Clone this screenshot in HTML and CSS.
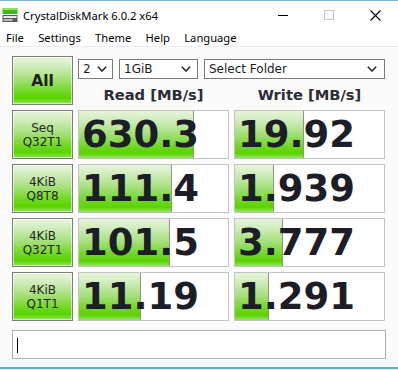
FILE: index.html
```html
<!DOCTYPE html>
<html>
<head>
<meta charset="utf-8">
<link rel="stylesheet" href="styles.css">
</head>
<body>
<div class="window">
  <div class="titlebar">
    <svg class="appicon" width="16" height="16" viewBox="0 0 16 16">
      <rect x="0.5" y="1" width="15" height="6" fill="#3fb81e"/>
      <rect x="0.5" y="1" width="15" height="2" fill="#8fe070"/>
      <rect x="0.5" y="8" width="15" height="7" fill="#5a5a5a"/>
      <rect x="1.5" y="9" width="13" height="2" fill="#e8e8e8"/>
      <rect x="1.5" y="12" width="9" height="2" fill="#bdbdbd"/>
    </svg>
    <span class="title">CrystalDiskMark 6.0.2 x64</span>
    <div class="controls">
      <div class="ctl"><svg width="10" height="10" viewBox="0 0 10 10"><line x1="0" y1="5.5" x2="10" y2="5.5" stroke="#000" stroke-width="1"/></svg></div>
      <div class="ctl"><svg width="10" height="10" viewBox="0 0 10 10"><rect x="0.5" y="0.5" width="9" height="9" fill="none" stroke="#c4c4c4" stroke-width="1"/></svg></div>
      <div class="ctl"><svg width="11" height="11" viewBox="0 0 11 11"><path d="M0.5 0.5 L10.5 10.5 M10.5 0.5 L0.5 10.5" stroke="#000" stroke-width="1.1"/></svg></div>
    </div>
  </div>
  <div class="menubar">
    <span>File</span><span>Settings</span><span>Theme</span><span>Help</span><span>Language</span>
  </div>
  <main class="panel">
    <div class="grid">
      <div class="btn all">All</div>
      <div class="topctl">
        <div class="selects">
          <div class="sel s1"><span>2</span><svg class="chev" width="10" height="6" viewBox="0 0 10 6"><path d="M0.8 0.8 L5 5 L9.2 0.8" fill="none" stroke="#222" stroke-width="1.5"/></svg></div>
          <div class="sel s2"><span>1GiB</span><svg class="chev" width="10" height="6" viewBox="0 0 10 6"><path d="M0.8 0.8 L5 5 L9.2 0.8" fill="none" stroke="#222" stroke-width="1.5"/></svg></div>
          <div class="sel s3"><span>Select Folder</span><svg class="chev" width="10" height="6" viewBox="0 0 10 6"><path d="M0.8 0.8 L5 5 L9.2 0.8" fill="none" stroke="#222" stroke-width="1.5"/></svg></div>
        </div>
        <div class="heads">
          <div class="head">Read [MB/s]</div>
          <div class="head">Write [MB/s]</div>
        </div>
      </div>

      <div class="btn label">Seq<br>Q32T1</div>
      <div class="val" style="--fill:114px">630.3</div>
      <div class="val" style="--fill:68px">19.92</div>

      <div class="btn label">4KiB<br>Q8T8</div>
      <div class="val" style="--fill:92px">111.4</div>
      <div class="val" style="--fill:38px">1.939</div>

      <div class="btn label">4KiB<br>Q32T1</div>
      <div class="val" style="--fill:90px">101.5</div>
      <div class="val" style="--fill:47px">3.777</div>

      <div class="btn label">4KiB<br>Q1T1</div>
      <div class="val" style="--fill:61px">11.19</div>
      <div class="val" style="--fill:33px">1.291</div>
    </div>
    <div class="comment"><span class="caret"></span></div>
  </main>
  <div class="taskline"></div>
</div>
</body>
</html>
```
FILE: styles.css
```css
* { box-sizing: border-box; }
html, body { margin: 0; padding: 0; }
body {
  width: 398px;
  height: 370px;
  overflow: hidden;
  background: #ffffff;
  font-family: "DejaVu Sans", sans-serif;
}
.window {
  width: 398px;
  height: 370px;
  display: flex;
  flex-direction: column;
  border-top: 1px solid #7fb4d6;
  background: #fbfbfb;
}
.titlebar {
  height: 28px;
  flex: none;
  display: flex;
  align-items: center;
  background: #ffffff;
  padding-left: 2px;
}
.appicon { flex: none; }
.title {
  margin-left: 5px;
  font-family: "Noto Sans", sans-serif;
  font-size: 11.2px;
  color: #000;
}
.controls {
  margin-left: auto;
  display: flex;
  height: 28px;
}
.ctl {
  width: 46px;
  height: 28px;
  display: flex;
  align-items: center;
  justify-content: center;
}
.menubar {
  height: 18px;
  flex: none;
  display: flex;
  align-items: center;
  gap: 14.3px;
  padding-left: 6px;
  padding-bottom: 1px;
  background: #ffffff;
  font-family: "Noto Sans", sans-serif;
  font-size: 11.2px;
  color: #000;
  border-bottom: 1px solid #ececec;
}
.panel {
  flex: 1;
  padding: 9px 12px 0 12px;
  display: flex;
  flex-direction: column;
}
.grid {
  display: grid;
  grid-template-columns: 61px 151px 151px;
  grid-auto-rows: 49px;
  column-gap: 5px;
  row-gap: 5px;
}
.btn {
  border: 1px solid #7d7d7d;
  box-shadow: inset 0 0 0 1px rgba(255,255,255,0.55);
  background: linear-gradient(to bottom, #e9f5e1 0%, #cdebb6 22%, #a4e078 48%, #72d826 72%, #5ad300 88%, #8ee55a 100%);
  display: flex;
  align-items: center;
  justify-content: center;
  text-align: center;
  color: #1d1d1d;
}
.all {
  font-weight: bold;
  font-size: 15.5px;
}
.label {
  font-size: 12px;
  line-height: 14px;
  color: #26261e;
}
.topctl {
  grid-column: 2 / 4;
  display: flex;
  flex-direction: column;
}
.selects {
  margin-top: 3px;
  display: flex;
  gap: 6px;
  height: 20px;
}
.sel {
  height: 20px;
  border: 1px solid #7a7a7a;
  background: #ffffff;
  display: flex;
  align-items: center;
  padding-left: 4px;
  padding-right: 6px;
  font-size: 12px;
  color: #1c1c1c;
}
.sel span { flex: 1; }
.chev { flex: none; }
.s1 { width: 35px; padding-right: 5px; }
.s2 { width: 79px; }
.s3 { width: 181px; padding-right: 7px; }
.heads {
  margin-top: 6px;
  display: grid;
  grid-template-columns: 151px 151px;
  column-gap: 5px;
  height: 20px;
}
.head {
  text-align: center;
  font-weight: bold;
  font-size: 14.7px;
  line-height: 20px;
  color: #2c2c36;
}
.val {
  border: 1px solid #c3c3c3;
  background-color: #ffffff;
  background-image:
    linear-gradient(#8a9a80, #8a9a80),
    linear-gradient(to bottom, #e6f4dc 0%, #cdebb8 22%, #a2df76 50%, #70d724 75%, #5cd300 90%, #95e566 100%);
  background-repeat: no-repeat, no-repeat;
  background-size: 1px 100%, var(--fill) 100%;
  background-position: var(--fill) 0, 0 0;
  font-weight: bold;
  font-size: 37px;
  line-height: 47px;
  padding-left: 3px;
  color: #1d1d27;
  white-space: nowrap;
  overflow: hidden;
}
.comment {
  margin-top: 9px;
  width: 374px;
  height: 29px;
  border: 1px solid #adadad;
  background: #ffffff;
  display: flex;
  align-items: center;
  padding-left: 4px;
}
.caret {
  display: block;
  width: 1px;
  height: 15px;
  background: #000;
  margin-top: 2px;
}
.taskline {
  height: 2px;
  flex: none;
  background: #4fb3c9;
  margin-bottom: 1px;
}
```
